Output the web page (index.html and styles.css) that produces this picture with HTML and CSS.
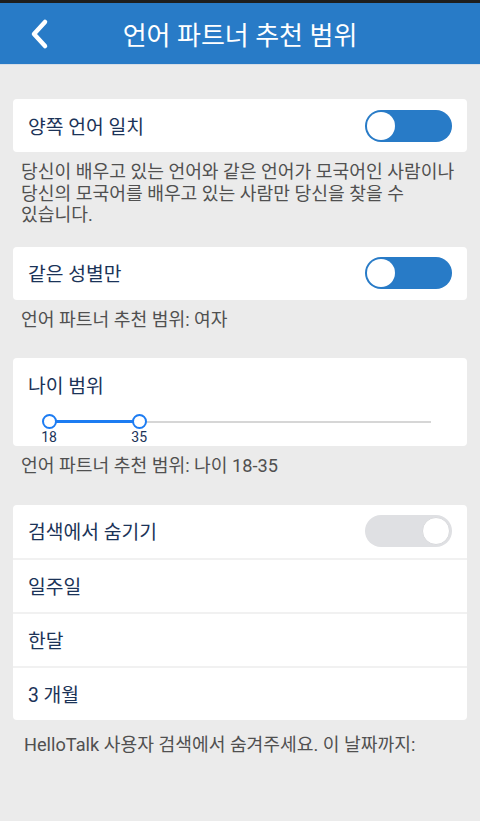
FILE: index.html
```html
<!DOCTYPE html>
<html lang="ko">
<head>
    <meta charset="UTF-8">
    <meta name="viewport" content="width=device-width, initial-scale=1.0">
    <title>언어 파트너 추천 범위</title>
    <link rel="stylesheet" href="styles.css">
</head>
<body>
    <div class="statusbar"></div>
    <header class="header">
        <a class="back" href="#">
            <svg width="20" height="32" viewBox="0 0 20 32">
                <path d="M16 4 L5 16 L16 28" fill="none" stroke="#fff" stroke-width="4.5" stroke-linecap="round" stroke-linejoin="round"/>
            </svg>
        </a>
        <h1>언어 파트너 추천 범위</h1>
    </header>

    <main class="content">
        <div class="card">
            <div class="row">
                <span class="label">양쪽 언어 일치</span>
                <span class="toggle on"><span class="knob"></span></span>
            </div>
        </div>
        <p class="note note-long">당신이 배우고 있는 언어와 같은 언어가 모국어인 사람이나 당신의 모국어를 배우고 있는 사람만 당신을 찾을 수 있습니다.</p>

        <div class="card">
            <div class="row">
                <span class="label">같은 성별만</span>
                <span class="toggle on"><span class="knob"></span></span>
            </div>
        </div>
        <p class="note">언어 파트너 추천 범위: 여자</p>

        <div class="card">
            <div class="row">
                <span class="label">나이 범위</span>
            </div>
            <div class="slider">
                <div class="track"></div>
                <!-- range 18-90, selected 18-35 -->
                <div class="fill" style="left: 0%; width: 23.6%;"></div>
                <div class="handle" style="left: 0%;"><span>18</span></div>
                <div class="handle" style="left: 23.6%;"><span>35</span></div>
            </div>
        </div>
        <p class="note">언어 파트너 추천 범위: 나이 18-35</p>

        <div class="card">
            <div class="row">
                <span class="label">검색에서 숨기기</span>
                <span class="toggle off"><span class="knob"></span></span>
            </div>
            <div class="row divided"><span class="label">일주일</span></div>
            <div class="row divided"><span class="label">한달</span></div>
            <div class="row divided"><span class="label">3 개월</span></div>
        </div>
        <p class="note note-footer">HelloTalk 사용자 검색에서 숨겨주세요. 이 날짜까지:</p>
    </main>
</body>
</html>
```

FILE: styles.css
```css
body {
    margin: 0;
    background-color: #ebebeb;
    font-family: Roboto, "Noto Sans CJK KR", sans-serif;
}
.statusbar {
    height: 3px;
    background: #1e1e1e;
}
.header {
    height: 61px;
    background: #287bc7;
    display: flex;
    align-items: center;
    justify-content: center;
    position: relative;
    border-bottom: 1px solid #d6dde6;
}
.header h1 {
    margin: 0;
    color: #fff;
    font-size: 26px;
    font-weight: normal;
}
.back {
    position: absolute;
    left: 29px;
    top: 15px;
    display: flex;
}
.content {
    padding: 34px 13px 40px;
}
.card {
    background: #fff;
    border-radius: 4px;
}
.row {
    height: 53px;
    display: flex;
    align-items: center;
    justify-content: space-between;
    padding: 0 15px 0 15px;
}
.row.divided {
    height: 52px;
    border-top: 2px solid #f1f1f1;
}
.label {
    font-size: 19.3px;
    color: #1b3358;
}
.toggle {
    width: 87px;
    height: 32px;
    border-radius: 16px;
    box-sizing: border-box;
    padding: 2px;
    display: flex;
}
.toggle .knob {
    width: 28px;
    height: 28px;
    border-radius: 50%;
    background: #fff;
    box-sizing: border-box;
}
.toggle.on {
    background: #287bc7;
}
.toggle.off {
    background: #dfe0e3;
    justify-content: flex-end;
}
.toggle.off .knob {
    border: 1px solid #d9dadd;
}
.note {
    margin: 0;
    color: #505050;
    font-size: 18.2px;
    line-height: 21.5px;
    padding: 9px 8px 28px;
    word-break: keep-all;
}
.note-long {
    padding-bottom: 21px;
}
.note-footer {
    padding: 14px 11px 0;
}
.slider {
    position: relative;
    height: 35px;
    margin: 0 36px;
}
.track {
    position: absolute;
    left: 0;
    right: 0;
    top: 10px;
    height: 2px;
    background: #d6d6d6;
}
.fill {
    position: absolute;
    top: 9px;
    height: 3px;
    background: #1d7cf2;
}
.handle {
    position: absolute;
    top: 3px;
    width: 15px;
    height: 15px;
    margin-left: -7.5px;
    box-sizing: border-box;
    border: 2.5px solid #1d7cf2;
    border-radius: 50%;
    background: #fff;
}
.handle span {
    position: absolute;
    top: 14px;
    left: 50%;
    transform: translateX(-50%);
    font-size: 14px;
    line-height: 15px;
    color: #1b3358;
}
```
